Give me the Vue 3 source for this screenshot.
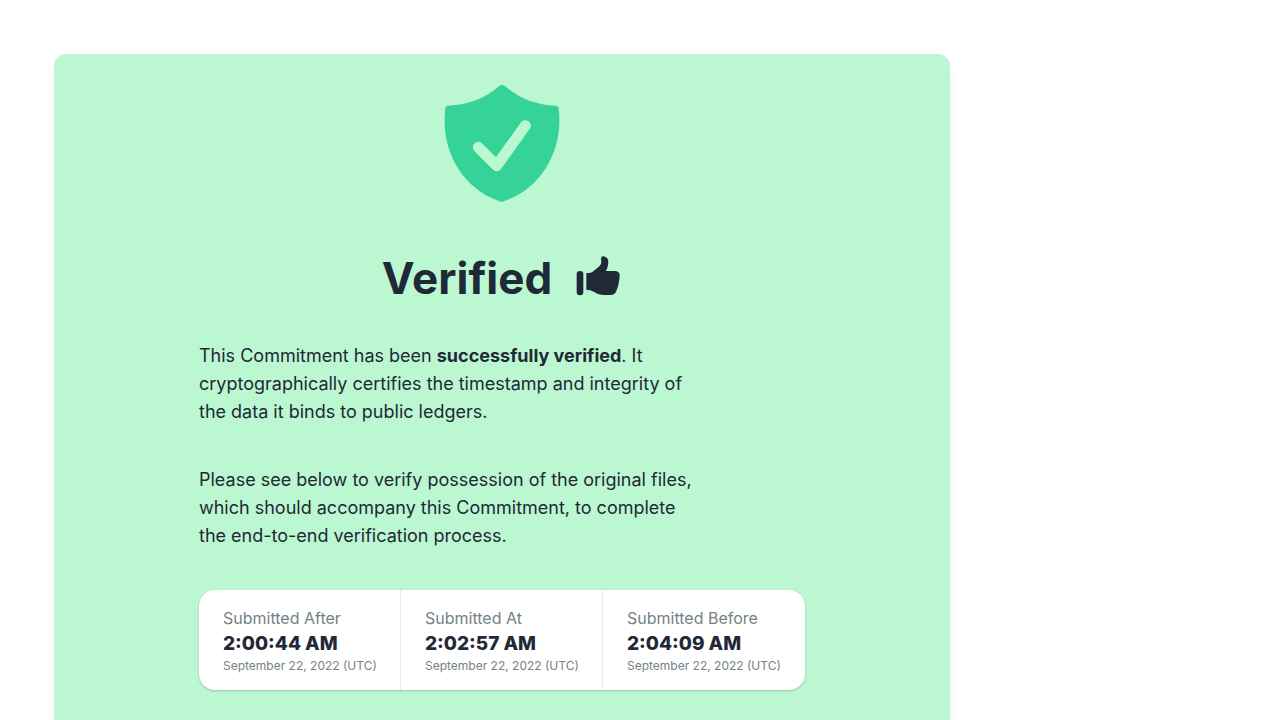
<script setup>
const stamps = [
  { title: 'Submitted After', time: '2:00:44 AM', date: 'September 22, 2022 (UTC)' },
  { title: 'Submitted At', time: '2:02:57 AM', date: 'September 22, 2022 (UTC)' },
  { title: 'Submitted Before', time: '2:04:09 AM', date: 'September 22, 2022 (UTC)' },
]
</script>

<template>
  <main class="page">
    <section class="card">
      <svg class="shield" viewBox="0 0 432 420" aria-hidden="true">
        <path
          fill="#36d399"
          d="M208 36 Q216 30 225 36 C268 74 318 93 377 95 Q385 95 386 103 C401 223 340 341 223 381 Q215 385 207 381 C90 339 31 222 46 103 Q47 95 55 95 C116 92 164 74 208 36 Z"
        />
        <path
          d="M145 220 L200 275 L286 155"
          fill="none"
          stroke="#bbf7d0"
          stroke-width="33"
          stroke-linecap="round"
          stroke-linejoin="round"
        />
      </svg>

      <h1 class="heading">
        <span>Verified</span>
        <svg class="thumb" viewBox="0 0 138 126" aria-hidden="true">
          <rect x="2" y="48" width="20" height="73" rx="10" />
          <path
            d="M31 54 H38 Q45 54 50 50 L70 34 Q76 29 76 21 L75 11 Q75 4 82 4 Q98 6 97 23 Q96 37 90 48 H118 Q132 49 131 63 Q129 90 121 108 Q116 120 104 120 H80 Q66 119 53 110 Q45 105 37 105 H31 Z"
          />
        </svg>
      </h1>

      <div class="content">
        <p class="copy">
          This Commitment has been <strong>successfully verified</strong>. It cryptographically
          certifies the timestamp and integrity of the data it binds to public ledgers.
        </p>
        <p class="copy">
          Please see below to verify possession of the original files, which should accompany this
          Commitment, to complete the end-to-end verification process.
        </p>

        <dl class="stats">
          <div v-for="stamp in stamps" :key="stamp.title" class="stat">
            <dt class="stat-title">{{ stamp.title }}</dt>
            <dd class="stat-value">{{ stamp.time }}</dd>
            <dd class="stat-date">{{ stamp.date }}</dd>
          </div>
        </dl>
      </div>
    </section>
  </main>
</template>

<style>
body {
  background: #fff;
}
</style>

<style scoped>
.page {
  height: 100vh;
  box-sizing: border-box;
  padding: 54px 54px 0;
  overflow: hidden;
  font-family: Inter, "Liberation Sans", sans-serif;
  color: #1f2937;
}
.card {
  box-sizing: border-box;
  max-width: 896px;
  min-height: 100vh;
  padding: 20px 32px 48px;
  border-radius: 12px;
  background: #bbf7d0;
  box-shadow: 0 10px 15px -3px rgba(0, 0, 0, 0.08), 0 4px 6px -4px rgba(0, 0, 0, 0.08);
  display: flex;
  flex-direction: column;
  align-items: center;
}
.shield {
  width: 144px;
  height: 140px;
}
.heading {
  display: flex;
  align-items: center;
  gap: 24px;
  margin: 40px 0;
  font-size: 44px;
  line-height: 48px;
  font-weight: 700;
}
.thumb {
  width: 46px;
  height: 42px;
  margin-bottom: 4px;
  fill: #1f2937;
}
.content {
  width: 100%;
  max-width: 606px;
}
.copy {
  max-width: 500px;
  margin: 0 0 40px;
  font-size: 18px;
  line-height: 28px;
  font-weight: 400;
}
.copy strong {
  font-weight: 700;
}
.stats {
  display: grid;
  grid-template-columns: repeat(3, 1fr);
  margin: 0;
  border-radius: 16px;
  background: #fff;
  box-shadow: 0 1px 3px rgba(0, 0, 0, 0.1), 0 1px 2px rgba(0, 0, 0, 0.1);
}
.stat {
  padding: 16px 0 16px 24px;
  white-space: nowrap;
}
.stat:not(:last-child) {
  border-right: 1px solid #e5e7e9;
}
.stat dd {
  margin: 0;
}
.stat-title {
  font-size: 16px;
  line-height: 24px;
  color: #748285;
}
.stat-value {
  font-size: 19px;
  line-height: 28px;
  font-weight: 800;
}
.stat-date {
  font-size: 12px;
  line-height: 16px;
  color: #748285;
}
</style>
